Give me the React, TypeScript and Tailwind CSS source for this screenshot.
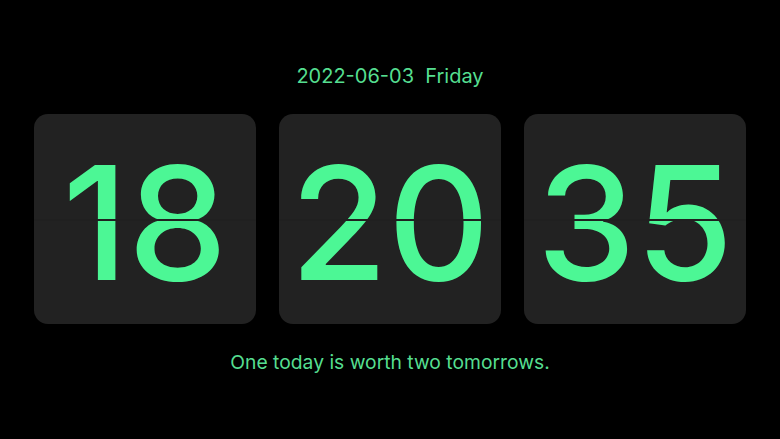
import React from 'react';

const FONT = { fontFamily: 'Inter, "Liberation Sans", sans-serif' };

const FlipCard = ({ value }: { value: string }) => (
  <div className="relative flex h-[210px] w-[222px] items-center justify-center overflow-hidden rounded-[14px] bg-[#222222]">
    <span className="pt-[8px] text-[158px] font-medium leading-none tracking-[0px] text-[#4cf795]">{value}</span>
    {/* split line across the middle */}
    <div className="absolute left-0 right-0 top-[105px] h-[2px] bg-[#202020]" />
  </div>
);

export default function App() {
  return (
    <div className="flex h-[439px] w-[780px] flex-col items-center bg-black" style={FONT}>
      <div className="mt-[63px] text-[20px] leading-[26px] text-[#55de90]">
        2022-06-03&nbsp;&nbsp;Friday
      </div>
      <div className="mt-[25px] flex gap-[23px]">
        <FlipCard value="18" />
        <FlipCard value="20" />
        <FlipCard value="35" />
      </div>
      <div className="mt-[25px] text-[19.3px] leading-[26px] text-[#55de90]">
        One today is worth two tomorrows.
      </div>
    </div>
  );
}
